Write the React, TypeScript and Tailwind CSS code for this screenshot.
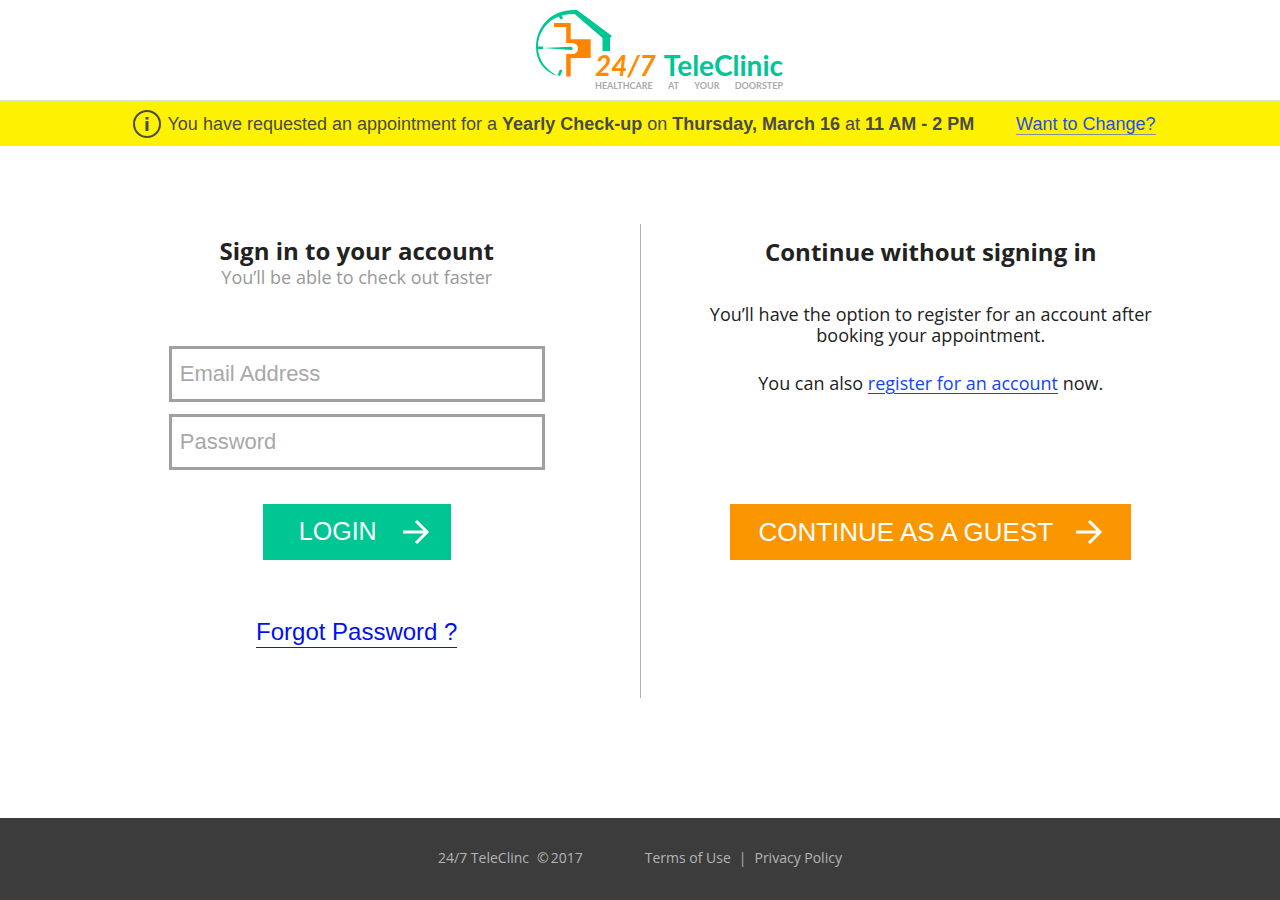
import React from "react";

function LogoMark() {
  return (
    <svg width="78" height="78" viewBox="535 9 78 78" aria-hidden="true">
      <g fill="#00c693">
        <path d="M576 10C551 9 536 27 536 47C536 61 544 72 558 76C546 70 538 60 538 47C538 29 552 13 575 14Z" />
        <path d="M575 10H577L612 36L610 38V51H602.500V38L574 13.500Z" />
        <path d="M558.500 16L561.500 14.500L563 18.500L560.500 19.500Z" />
        <path d="M537 46.500H543V49H537Z" />
        <path d="M557.500 75L560 69.500L562.500 70.500L560 76Z" />
        <path d="M543 48L571 46.700A1.600 1.600 0 0 1 571 49.900Z" />
      </g>
      <path
        fill="#ff8500"
        d="M554 23H570.700V39.200H590.700V58H570.700V76.500H566.200V54H572.500A5.500 5.500 0 0 0 572.500 43H566.200V27H554Z"
      />
    </svg>
  );
}

function Logo() {
  return (
    <a href="#" aria-label="24/7 TeleClinic" className="flex items-start font-['Lato',sans-serif]">
      <LogoMark />
      <div className="-ml-[18px] w-[188px] pt-10">
        <div className="flex justify-between whitespace-nowrap font-bold leading-8">
          <span className="text-[28px] italic text-[#ff8c00]">24/7</span>
          <span className="text-[28px] text-[#00c693]">TeleClinic</span>
        </div>
        <div className="flex justify-between whitespace-nowrap text-[9px] font-bold leading-[10px] text-[#aaaaaa]">
          <span>HEALTHCARE</span>
          <span>AT</span>
          <span>YOUR</span>
          <span>DOORSTEP</span>
        </div>
      </div>
    </a>
  );
}

function InfoIcon() {
  return (
    <svg width="28" height="28" viewBox="0 0 28 28" fill="none" aria-hidden="true" className="shrink-0">
      <circle cx="14" cy="14" r="13" stroke="#4a4a4a" strokeWidth="2" />
      <path d="M12.500 7H15.500V9.500H12.500ZM12.500 11H15.500V21H12.500Z" fill="#4a4a4a" />
    </svg>
  );
}

function Arrow() {
  return (
    <svg width="28" height="28" viewBox="0 0 28 28" fill="none" stroke="white" strokeWidth="3" aria-hidden="true" className="shrink-0">
      <path d="M1 14H25M14 3L25 14L14 25" />
    </svg>
  );
}

const fieldClass =
  "block h-14 w-full border-3 border-[#a0a0a0] bg-white px-2 font-['Liberation_Sans',sans-serif] text-[22px] text-[#333333] placeholder:text-[#a8a8a8] outline-none";

export default function App() {
  return (
    <div className="flex min-h-screen flex-col bg-white font-['Open_Sans',sans-serif] text-[#222222]">
      <header className="flex justify-center border-b-2 border-[#dddddd] py-[9px] pl-[38px]">
        <Logo />
      </header>

      <div className="flex h-11 items-center justify-center bg-[#fff200] pl-2 font-['Liberation_Sans',sans-serif] text-[18px] text-[#4a4a4a]">
        <div className="flex w-full max-w-[1023px] items-center justify-between">
          <div className="flex items-center gap-[7px]">
            <InfoIcon />
            <p>
              You have requested an appointment for a <strong>Yearly Check-up</strong> on{" "}
              <strong>Thursday, March 16</strong> at <strong>11 AM - 2 PM</strong>
            </p>
          </div>
          <a href="#" className="border-b border-[#8090a0] leading-5 text-[#1e50e6]">
            Want to Change?
          </a>
        </div>
      </div>

      <main className="grid grow grid-cols-[1fr_1px_1fr] pt-[78px] pb-[120px]">
        <section className="flex flex-col items-center pt-[11px] pl-[74px]">
          <h1 className="text-2xl font-bold">Sign in to your account</h1>
          <p className="text-lg leading-5 text-[#999999]">You’ll be able to check out faster</p>
          <form className="mt-[59px] flex w-[376px] flex-col items-center" onSubmit={(e) => e.preventDefault()}>
            <div className="flex w-full flex-col gap-3">
              <input type="email" aria-label="Email Address" placeholder="Email Address" className={fieldClass} />
              <input type="password" aria-label="Password" placeholder="Password" className={fieldClass} />
            </div>
            <button
              type="submit"
              className="mt-[34px] flex h-14 items-center gap-[25px] bg-[#00c693] pr-[21px] pl-9 font-['Liberation_Sans',sans-serif] text-[25px] text-white"
            >
              LOGIN
              <Arrow />
            </button>
          </form>
          <a
            href="#"
            className="mt-[57px] border-b border-[#0a14ff] font-['Liberation_Sans',sans-serif] text-2xl leading-[30px] text-[#0010f0]"
          >
            Forgot Password ?
          </a>
        </section>

        <div className="bg-[#b4b4b4]" />

        <section className="flex flex-col items-center pt-3 pr-[59px] text-center">
          <h2 className="text-2xl font-bold">Continue without signing in</h2>
          <p className="mt-9 w-[460px] text-lg leading-[21px]">
            You’ll have the option to register for an account after booking your appointment.
          </p>
          <p className="mt-[27px] text-lg leading-[21px]">
            You can also{" "}
            <a href="#" className="text-[#1446f0] underline decoration-1 underline-offset-3">
              register for an account
            </a>{" "}
            now.
          </p>
          <button
            type="button"
            className="mt-[110px] flex h-14 items-center gap-[22px] bg-[#fa9600] px-7 font-['Liberation_Sans',sans-serif] text-[26px] text-white"
          >
            CONTINUE AS A GUEST
            <Arrow />
          </button>
        </section>
      </main>

      <footer className="flex h-[82px] items-center justify-center gap-[62px] border-b-2 border-[#403a3b] bg-[#3c3c3c] text-sm text-[#b4b4b4]">
        <p className="flex gap-2">
          <span>24/7 TeleClinc</span>
          <span className="flex gap-0.5">
            <span>©</span>
            <span>2017</span>
          </span>
        </p>
        <nav className="flex gap-2">
          <a href="#">Terms of Use</a>
          <span>|</span>
          <a href="#">Privacy Policy</a>
        </nav>
      </footer>
    </div>
  );
}
